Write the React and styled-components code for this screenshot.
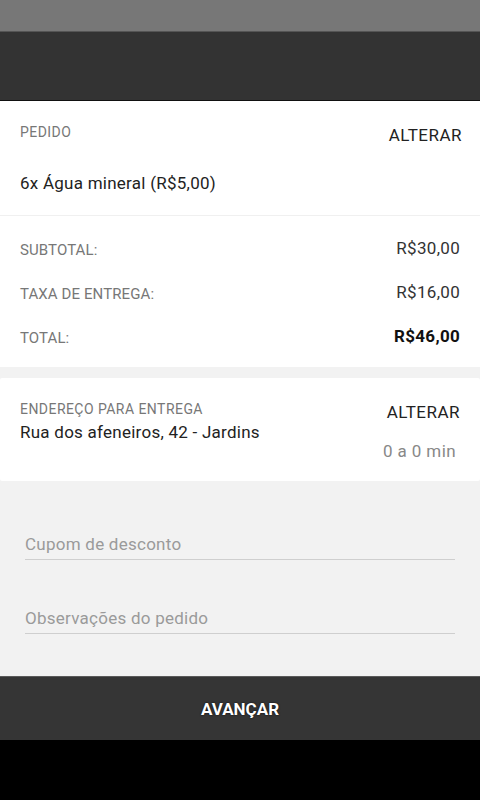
import React from "react";
import styled, { createGlobalStyle } from "styled-components";

const GlobalStyle = createGlobalStyle`
  html, body {
    margin: 0;
    padding: 0;
    background: #f2f2f2;
    font-family: Roboto, "Liberation Sans", sans-serif;
  }
  * { box-sizing: border-box; }
`;

const Screen = styled.div`
  width: 480px;
  height: 800px;
  display: flex;
  flex-direction: column;
  background: #f2f2f2;
  overflow: hidden;
`;

const StatusBar = styled.div`
  height: 32px;
  background: #777777;
  border-bottom: 1px solid #555555;
`;

const Toolbar = styled.div`
  height: 69px;
  background: #333333;
  border-bottom: 1px solid #111111;
`;

const Section = styled.div`
  background: #ffffff;
  padding: ${(p) => p.pad};
  border-bottom: ${(p) => (p.divider ? "1px solid #f0f0f0" : "none")};
`;

const Row = styled.div`
  display: flex;
  justify-content: space-between;
  align-items: flex-start;
`;

const Caption = styled.div`
  font-size: 14px;
  line-height: 18px;
  color: #777777;
  letter-spacing: 0.45px;
`;

const Action = styled.div`
  font-size: 17px;
  line-height: 18px;
  color: #222222;
  letter-spacing: 0.5px;
  margin-top: ${(p) => p.offset || 0}px;
`;

const Item = styled.div`
  font-size: 17px;
  line-height: 20px;
  color: #222222;
  letter-spacing: 0.25px;
  margin-top: ${(p) => p.gap}px;
`;

const TotalRow = styled.div`
  height: 44px;
  display: flex;
  align-items: center;
  justify-content: space-between;
`;

const TotalLabel = styled.span`
  font-size: 15px;
  color: #777777;
  letter-spacing: 0.1px;
`;

const TotalValue = styled.span`
  font-size: 17px;
  letter-spacing: 0.3px;
  color: ${(p) => (p.strong ? "#111111" : "#333333")};
  font-weight: ${(p) => (p.strong ? 700 : 400)};
  margin-top: -4px;
`;

const Gap = styled.div`
  height: 11px;
`;

const Card = styled.div`
  background: #ffffff;
  border-radius: 2px;
  height: 103px;
  padding: 22px 20px 0 20px;
  display: flex;
  justify-content: space-between;
`;

const Column = styled.div`
  display: flex;
  flex-direction: column;
  align-items: ${(p) => (p.end ? "flex-end" : "flex-start")};
`;

const Muted = styled.div`
  font-size: 17px;
  line-height: 20px;
  color: #888888;
  letter-spacing: 0.4px;
  margin-top: 20px;
  margin-right: 4px;
`;

const Form = styled.div`
  flex: 1;
  padding: 47px 25px 0 25px;
  display: flex;
  flex-direction: column;
  gap: 42px;
`;

const Field = styled.input`
  width: 100%;
  height: 32px;
  border: none;
  border-bottom: 1px solid #cfcfcf;
  background: transparent;
  font-family: Roboto, "Liberation Sans", sans-serif;
  font-size: 17px;
  letter-spacing: 0.25px;
  color: #333333;
  padding: 0;
  outline: none;
  &::placeholder {
    color: #9a9a9a;
  }
`;

const NextButton = styled.button`
  height: 64px;
  background: #353535;
  border: none;
  border-top: 1px solid #5a5a5a;
  color: #ffffff;
  font-family: Roboto, "Liberation Sans", sans-serif;
  font-size: 17px;
  font-weight: 700;
  text-shadow: 0 0 2px rgba(0, 0, 0, 0.9);
`;

const NavBar = styled.div`
  height: 60px;
  background: #000000;
`;

const totals = [
  { label: "SUBTOTAL:", value: "R$30,00" },
  { label: "TAXA DE ENTREGA:", value: "R$16,00" },
  { label: "TOTAL:", value: "R$46,00", strong: true },
];

const App = () => {
  return (
    <>
      <GlobalStyle />
      <Screen>
        <StatusBar />
        <Toolbar />
        <Section pad="22px 18px 22px 20px" divider>
          <Row>
            <Caption>PEDIDO</Caption>
            <Action offset={3}>ALTERAR</Action>
          </Row>
          <Item gap={29}>6x Água mineral (R$5,00)</Item>
        </Section>
        <Section pad="12px 20px 7px 20px">
          {totals.map((t) => (
            <TotalRow key={t.label}>
              <TotalLabel>{t.label}</TotalLabel>
              <TotalValue strong={t.strong}>{t.value}</TotalValue>
            </TotalRow>
          ))}
        </Section>
        <Gap />
        <Card>
          <Column>
            <Caption>ENDEREÇO PARA ENTREGA</Caption>
            <Item gap={4}>Rua dos afeneiros, 42 - Jardins</Item>
          </Column>
          <Column end>
            <Action offset={3}>ALTERAR</Action>
            <Muted>0 a 0 min</Muted>
          </Column>
        </Card>
        <Form>
          <Field placeholder="Cupom de desconto" />
          <Field placeholder="Observações do pedido" />
        </Form>
        <NextButton>AVANÇAR</NextButton>
        <NavBar />
      </Screen>
    </>
  );
};

export default App;
